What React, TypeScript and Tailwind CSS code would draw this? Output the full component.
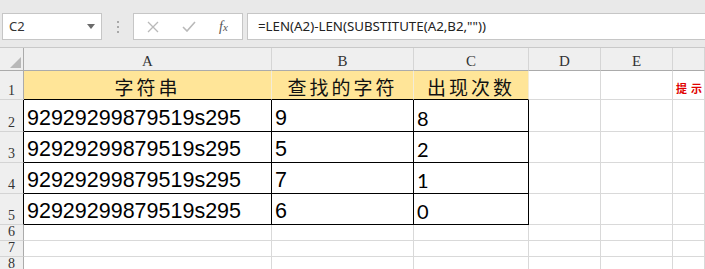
import React from "react";

const cols = ["A", "B", "C", "D", "E", "F"];
const rowHeights = ["h-[29px]", "h-[32px]", "h-[31px]", "h-[31px]", "h-[31px]", "h-[16px]", "h-[16px]", "h-[16px]"];

const data = [
  ["92929299879519s295", "9", "8"],
  ["92929299879519s295", "5", "2"],
  ["92929299879519s295", "7", "1"],
  ["92929299879519s295", "6", "0"],
];

const headers = ["字符串", "查找的字符", "出现次数"];

function Toolbar() {
  return (
    <div className="flex h-[47px] items-start bg-[#e9e9e9] pt-[13px] pl-[2px]">
      {/* Name box */}
      <div className="flex h-[27px] w-[100px] items-center justify-between border border-[#c6c6c6] bg-white px-[6px]">
        <span className="text-[13px] text-[#333] [font-family:'Noto_Sans',sans-serif]">C2</span>
        <svg width="8" height="5" viewBox="0 0 8 5">
          <path d="M0 0h8L4 5z" fill="#6b6b6b" />
        </svg>
      </div>
      {/* separator dots */}
      <div className="flex h-[27px] w-[31px] flex-col items-center justify-center gap-[3px]">
        <span className="h-[2px] w-[2px] bg-[#a8a8a8]" />
        <span className="h-[2px] w-[2px] bg-[#a8a8a8]" />
        <span className="h-[2px] w-[2px] bg-[#a8a8a8]" />
      </div>
      {/* icons */}
      <div className="flex h-[27px] w-[110px] items-center border border-[#c6c6c6] bg-white">
        <svg className="ml-[13px]" width="12" height="12" viewBox="0 0 12 12">
          <path d="M1 1l10 10M11 1L1 11" stroke="#b9b9b9" strokeWidth="1.3" />
        </svg>
        <svg className="ml-[23px]" width="14" height="11" viewBox="0 0 14 11">
          <path d="M1 6l4 4L13 1" stroke="#b9b9b9" strokeWidth="1.6" fill="none" />
        </svg>
        <span className="ml-[23px] text-[14px] italic text-[#555] [font-family:'Liberation_Serif',serif]">
          f<span className="text-[11px]">x</span>
        </span>
      </div>
      {/* formula bar */}
      <div className="ml-[4px] flex h-[27px] flex-1 items-center border border-r-0 border-[#c6c6c6] bg-white pl-[10px]">
        <span className="text-[13.3px] text-[#222] [font-family:'Noto_Sans',sans-serif]">
          =LEN(A2)-LEN(SUBSTITUTE(A2,B2,""))
        </span>
      </div>
    </div>
  );
}

function Cell({
  row,
  col,
  children,
}: {
  row: number;
  col: number;
  children?: React.ReactNode;
}) {
  const inTable = col <= 2 && row >= 2 && row <= 5;
  const isHead = row === 1 && col <= 2;
  let cls = "flex border-b border-r ";
  if (inTable) {
    cls += "border-black bg-white ";
  } else if (isHead) {
    cls += "border-r-[#f3ecd8] border-b-black bg-[#ffe598] ";
  } else {
    cls += "border-[#d9d9d9] bg-white ";
  }
  if (col === 2 && row === 1) cls += "border-r-[#d4d4d4] ";
  if (col === 5) cls += "overflow-hidden ";
  return <div className={cls + rowHeights[row - 1]}>{children}</div>;
}

function Sheet() {
  return (
    <div className="grid grid-cols-[24px_248px_142px_115px_72px_72px_1fr] border-t border-[#c9c9c9]">
      {/* column headers */}
      <div className="relative h-[23px] border-r border-b border-[#ababab] bg-[#efefef]">
        <svg className="absolute right-[2px] bottom-[2px]" width="11" height="11" viewBox="0 0 11 11">
          <path d="M11 0V11H0z" fill="#b8b8b8" />
        </svg>
      </div>
      {cols.map((c) => (
        <div
          key={c}
          className="flex h-[23px] items-end justify-center border-r border-b border-r-[#d5d5d5] border-b-[#ababab] bg-[#efefef] pb-[1px] text-[15px] leading-none text-[#333] [font-family:'Liberation_Serif',serif]"
        >
          {c === "F" ? "" : c}
        </div>
      ))}

      {rowHeights.map((h, i) => {
        const row = i + 1;
        return (
          <React.Fragment key={row}>
            <div
              className={`flex items-end justify-center border-b border-r border-b-[#d4d4d4] bg-[#efefef] text-[14px] leading-none text-[#333] [font-family:'Liberation_Serif',serif] ${h} ${
                row >= 2 && row <= 5 ? "border-r-black" : "border-r-[#ababab]"
              }`}
            >
              <span className="pb-[1px]">{row}</span>
            </div>
            {cols.map((_, ci) => {
              let content: React.ReactNode = null;
              if (row === 1 && ci <= 2) {
                content = (
                  <div className="flex h-full w-full items-center justify-center pt-[4px] text-[19px] leading-[24px] tracking-[3px] text-[#111] [font-family:'Noto_Sans_CJK_SC',sans-serif]">
                    {headers[ci]}
                  </div>
                );
              } else if (row >= 2 && row <= 5 && ci <= 1) {
                content = (
                  <div className="flex h-full w-full items-end pb-[1px] pl-[3px] text-[21.5px] leading-[24px] text-black [font-family:'Liberation_Sans',sans-serif]">
                    {data[row - 2][ci]}
                  </div>
                );
              } else if (row >= 2 && row <= 5 && ci === 2) {
                content = (
                  <div className="flex h-full w-full items-end pb-[1px] pl-[3px] text-[20px] leading-[24px] text-black [font-family:Lato,sans-serif]">
                    {data[row - 2][ci]}
                  </div>
                );
              } else if (row === 1 && ci === 5) {
                content = (
                  <div className="flex h-full w-full items-end whitespace-nowrap pb-[4px] pl-[3px] text-[11px] font-bold leading-[14px] tracking-[4px] text-[#e00000] [font-family:'Noto_Sans_CJK_SC',sans-serif]">
                    提示：
                  </div>
                );
              }
              return (
                <Cell key={ci} row={row} col={ci}>
                  {content}
                </Cell>
              );
            })}
          </React.Fragment>
        );
      })}
    </div>
  );
}

export default function App() {
  return (
    <div className="h-[269px] w-[705px] overflow-hidden bg-white">
      <Toolbar />
      <Sheet />
    </div>
  );
}
